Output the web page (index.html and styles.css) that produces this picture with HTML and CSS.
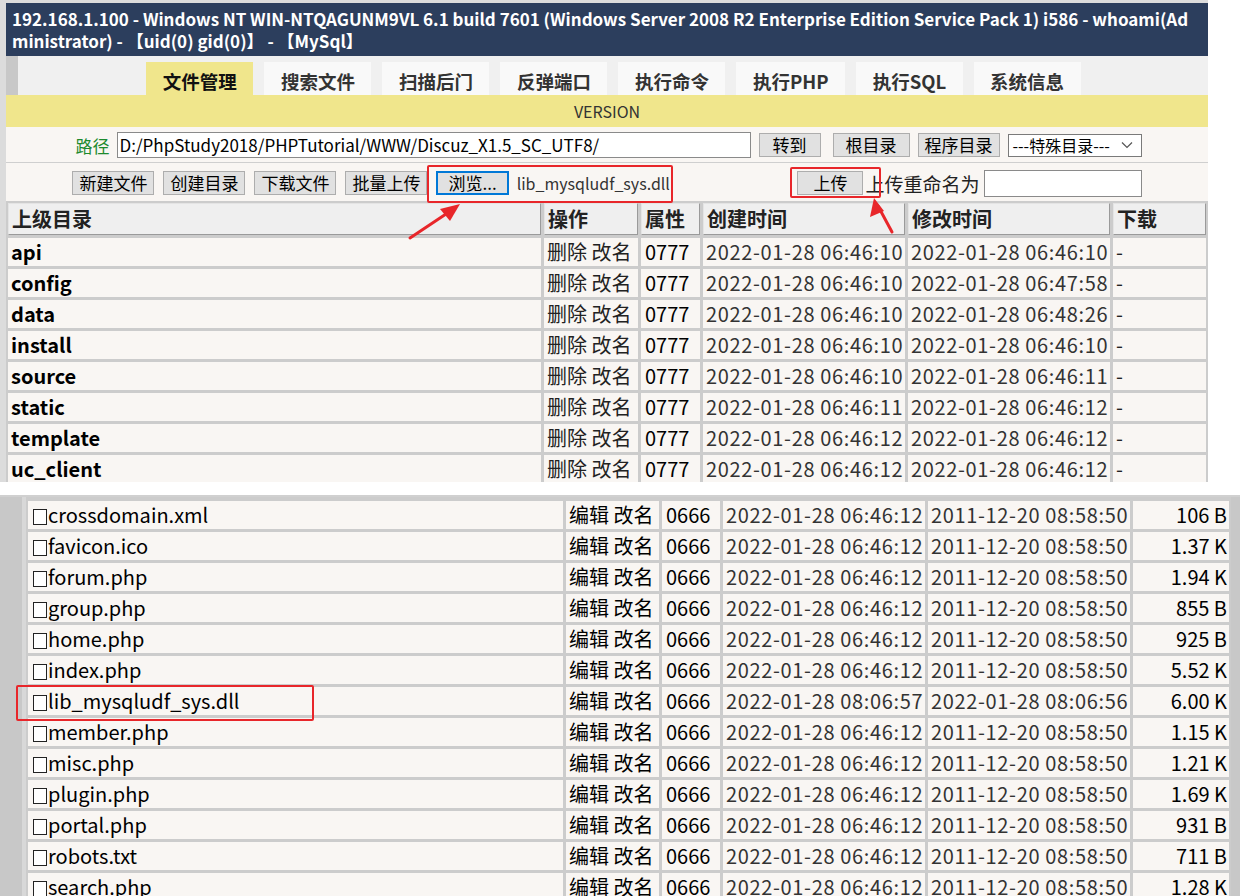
FILE: index.html
```html
<!DOCTYPE html>
<html lang="zh-CN">
<head>
<meta charset="utf-8">
<title>文件管理</title>
<link rel="stylesheet" href="styles.css">
</head>
<body>
<section class="shot shot-top">
  <div class="header">192.168.1.100 - Windows NT WIN-NTQAGUNM9VL 6.1 build 7601 (Windows Server 2008 R2 Enterprise Edition Service Pack 1) i586 - whoami(Administrator) - 【uid(0) gid(0)】 - 【MySql】</div>
  <nav class="tabs">
    <span class="tab active">文件管理</span>
    <span class="tab">搜索文件</span>
    <span class="tab">扫描后门</span>
    <span class="tab">反弹端口</span>
    <span class="tab">执行命令</span>
    <span class="tab">执行PHP</span>
    <span class="tab">执行SQL</span>
    <span class="tab">系统信息</span>
  </nav>
  <div class="version">VERSION</div>
  <div class="pathrow">
    <span class="pathlabel">路径</span>
    <span class="textbox pathbox">D:/PhpStudy2018/PHPTutorial/WWW/Discuz_X1.5_SC_UTF8/</span>
    <span class="btn btn-go">转到</span>
    <span class="btn btn-root">根目录</span>
    <span class="btn">程序目录</span>
    <span class="selectbox">---特殊目录---<svg class="chev" width="12" height="8" viewBox="0 0 12 8"><path d="M1 1.5 L6 6.5 L11 1.5" fill="none" stroke="#555" stroke-width="1.2"/></svg></span>
  </div>
  <div class="toolrow">
    <span class="btn">新建文件</span>
    <span class="btn">创建目录</span>
    <span class="btn">下载文件</span>
    <span class="btn">批量上传</span>
    <span class="fileinput"><span class="btn btn-browse">浏览...</span><span class="filename">lib_mysqludf_sys.dll</span></span>
    <span class="btn btn-upload">上传</span>
    <span class="renamelabel">上传重命名为</span>
    <span class="textbox renamebox"></span>
  </div>
  <div class="ftable ftable-top">
    <div class="th">上级目录</div><div class="th">操作</div><div class="th">属性</div><div class="th">创建时间</div><div class="th">修改时间</div><div class="th">下载</div>

    <div class="td dir">api</div><div class="td">删除 改名</div><div class="td attr">0777</div><div class="td date">2022-01-28 06:46:10</div><div class="td date">2022-01-28 06:46:10</div><div class="td">-</div>
    <div class="td dir">config</div><div class="td">删除 改名</div><div class="td attr">0777</div><div class="td date">2022-01-28 06:46:10</div><div class="td date">2022-01-28 06:47:58</div><div class="td">-</div>
    <div class="td dir">data</div><div class="td">删除 改名</div><div class="td attr">0777</div><div class="td date">2022-01-28 06:46:10</div><div class="td date">2022-01-28 06:48:26</div><div class="td">-</div>
    <div class="td dir">install</div><div class="td">删除 改名</div><div class="td attr">0777</div><div class="td date">2022-01-28 06:46:10</div><div class="td date">2022-01-28 06:46:10</div><div class="td">-</div>
    <div class="td dir">source</div><div class="td">删除 改名</div><div class="td attr">0777</div><div class="td date">2022-01-28 06:46:10</div><div class="td date">2022-01-28 06:46:11</div><div class="td">-</div>
    <div class="td dir">static</div><div class="td">删除 改名</div><div class="td attr">0777</div><div class="td date">2022-01-28 06:46:11</div><div class="td date">2022-01-28 06:46:12</div><div class="td">-</div>
    <div class="td dir">template</div><div class="td">删除 改名</div><div class="td attr">0777</div><div class="td date">2022-01-28 06:46:12</div><div class="td date">2022-01-28 06:46:12</div><div class="td">-</div>
    <div class="td dir">uc_client</div><div class="td">删除 改名</div><div class="td attr">0777</div><div class="td date">2022-01-28 06:46:12</div><div class="td date">2022-01-28 06:46:12</div><div class="td">-</div>
  </div>
  <span class="mark mark-browse"></span>
  <span class="mark mark-upload"></span>
  <svg class="arrows" width="1208" height="482" viewBox="0 0 1208 482">
    <g stroke="#e8262a" stroke-width="3" fill="none" stroke-linecap="round">
      <line x1="410" y1="238" x2="452" y2="210"/>
      <line x1="892" y1="232" x2="878" y2="206"/>
    </g>
    <g fill="#e8262a">
      <polygon points="460,204 440,209 450,221"/>
      <polygon points="874,198 870,217 884,211"/>
    </g>
  </svg>
</section>

<section class="shot shot-bottom">
  <div class="sidebar"></div>
  <div class="ftable ftable-bottom">
    <div class="td"><span class="cb"></span>crossdomain.xml</div><div class="td">编辑 改名</div><div class="td attr">0666</div><div class="td date">2022-01-28 06:46:12</div><div class="td date">2011-12-20 08:58:50</div><div class="td size">106 B</div>
    <div class="td"><span class="cb"></span>favicon.ico</div><div class="td">编辑 改名</div><div class="td attr">0666</div><div class="td date">2022-01-28 06:46:12</div><div class="td date">2011-12-20 08:58:50</div><div class="td size">1.37 K</div>
    <div class="td"><span class="cb"></span>forum.php</div><div class="td">编辑 改名</div><div class="td attr">0666</div><div class="td date">2022-01-28 06:46:12</div><div class="td date">2011-12-20 08:58:50</div><div class="td size">1.94 K</div>
    <div class="td"><span class="cb"></span>group.php</div><div class="td">编辑 改名</div><div class="td attr">0666</div><div class="td date">2022-01-28 06:46:12</div><div class="td date">2011-12-20 08:58:50</div><div class="td size">855 B</div>
    <div class="td"><span class="cb"></span>home.php</div><div class="td">编辑 改名</div><div class="td attr">0666</div><div class="td date">2022-01-28 06:46:12</div><div class="td date">2011-12-20 08:58:50</div><div class="td size">925 B</div>
    <div class="td"><span class="cb"></span>index.php</div><div class="td">编辑 改名</div><div class="td attr">0666</div><div class="td date">2022-01-28 06:46:12</div><div class="td date">2011-12-20 08:58:50</div><div class="td size">5.52 K</div>
    <div class="td"><span class="cb"></span>lib_mysqludf_sys.dll</div><div class="td">编辑 改名</div><div class="td attr">0666</div><div class="td date">2022-01-28 08:06:57</div><div class="td date">2022-01-28 08:06:56</div><div class="td size">6.00 K</div>
    <div class="td"><span class="cb"></span>member.php</div><div class="td">编辑 改名</div><div class="td attr">0666</div><div class="td date">2022-01-28 06:46:12</div><div class="td date">2011-12-20 08:58:50</div><div class="td size">1.15 K</div>
    <div class="td"><span class="cb"></span>misc.php</div><div class="td">编辑 改名</div><div class="td attr">0666</div><div class="td date">2022-01-28 06:46:12</div><div class="td date">2011-12-20 08:58:50</div><div class="td size">1.21 K</div>
    <div class="td"><span class="cb"></span>plugin.php</div><div class="td">编辑 改名</div><div class="td attr">0666</div><div class="td date">2022-01-28 06:46:12</div><div class="td date">2011-12-20 08:58:50</div><div class="td size">1.69 K</div>
    <div class="td"><span class="cb"></span>portal.php</div><div class="td">编辑 改名</div><div class="td attr">0666</div><div class="td date">2022-01-28 06:46:12</div><div class="td date">2011-12-20 08:58:50</div><div class="td size">931 B</div>
    <div class="td"><span class="cb"></span>robots.txt</div><div class="td">编辑 改名</div><div class="td attr">0666</div><div class="td date">2022-01-28 06:46:12</div><div class="td date">2011-12-20 08:58:50</div><div class="td size">711 B</div>
    <div class="td"><span class="cb"></span>search.php</div><div class="td">编辑 改名</div><div class="td attr">0666</div><div class="td date">2022-01-28 06:46:12</div><div class="td date">2011-12-20 08:58:50</div><div class="td size">1.28 K</div>
  </div>
  <div class="rightbar"></div>
  <span class="mark mark-lib"></span>
</section>
</body>
</html>
```
FILE: styles.css
```css
* { box-sizing: border-box; }
html, body { margin: 0; padding: 0; }
body {
  background: #fff;
  font-family: "Noto Sans CJK SC", sans-serif;
  color: #000;
  width: 1240px;
  height: 896px;
  overflow: hidden;
}

.shot { position: relative; overflow: hidden; }

/* ---------- top screenshot ---------- */
.shot-top {
  width: 1208px;
  height: 482px;
  border-top: 3px solid #dcdcdc;
  border-left: 6px solid #dcdcdc;
  background: #f9f6f3;
}
.header {
  background: #2c3e5d;
  color: #fff;
  font-weight: bold;
  font-size: 17px;
  line-height: 22px;
  padding: 5px 6px 9px 6px;
  height: 53px;
  word-break: break-all;
}
.tabs {
  height: 39px;
  background: #f0f0f0;
  border-left: 12px solid #c8c8c8;
  display: flex;
  justify-content: center;
  align-items: flex-end;
  gap: 11px;
  padding-left: 1px;
}
.tab {
  height: 33px;
  padding: 0 16.5px;
  background: #f9f9f9;
  color: #333;
  font-weight: bold;
  font-size: 18.5px;
  line-height: 38px;
}
.tab.active { background: #f0e68c; color: #111; }
.version {
  background: #f0e68c;
  height: 32px;
  line-height: 32px;
  text-align: center;
  font-size: 16px;
  color: #333;
}
.pathrow {
  height: 36px;
  display: flex;
  justify-content: center;
  align-items: center;
  gap: 8px;
  border-bottom: 1px solid #cfcfcf;
  padding-top: 1px;
}
.pathlabel { color: #1d8a2e; font-size: 17px; margin-left: 3px; }
.textbox {
  display: inline-block;
  height: 26px;
  background: #fff;
  border: 1px solid #8a8a8a;
  font-size: 17px;
  line-height: 24px;
  padding: 0 2px;
  color: #000;
}
.pathbox { width: 634px; margin-left: -1px; }
.btn {
  display: inline-block;
  height: 24px;
  padding: 0 6px;
  background: #e1e1e1;
  border: 1px solid #adadad;
  font-size: 17px;
  line-height: 22px;
  color: #000;
  white-space: nowrap;
}
.btn-go { padding: 0 13px; }
.btn-root { padding: 0 12px; margin-left: 4px; }
.selectbox {
  display: inline-flex;
  align-items: center;
  justify-content: space-between;
  width: 134px;
  height: 23px;
  border: 1px solid #7a7a7a;
  background: #fff;
  font-size: 16px;
  padding: 0 8px 0 4px;
  color: #000;
}
.toolrow {
  height: 38px;
  display: flex;
  justify-content: center;
  align-items: center;
  gap: 9px;
  padding-top: 2px;
}
.fileinput {
  display: inline-flex;
  align-items: center;
  gap: 8px;
  width: 352px;
}
.btn-browse {
  border: 2px solid #0078d7;
  padding: 0 10px;
  line-height: 20px;
}
.filename { font-size: 16px; color: #333; }
.btn-upload { padding: 0 15px; }
.renamelabel { font-size: 19px; color: #222; margin-left: -7px; }
.renamebox { width: 158px; height: 27px; margin-left: -5px; }

.ftable {
  display: grid;
  gap: 3px;
  background: #cccccc;
}
.ftable-top {
  grid-template-columns: 533px 94px 59px 202px 202px 93px;
  grid-template-rows: 32px;
  grid-auto-rows: 28px;
  padding: 2px;
  width: 1202px;
}
.th {
  background: #efefef;
  border: 1px solid;
  border-color: #e4e4e4 #9a9a9a #9a9a9a #e4e4e4;
  font-weight: bold;
  font-size: 20px;
  line-height: 30px;
  padding: 0 3px;
  color: #222;
}
.td {
  background: #f9f6f3;
  font-size: 20px;
  line-height: 28px;
  padding: 0 3px;
  color: #222;
  white-space: nowrap;
  overflow: hidden;
}
.td.dir { font-weight: bold; color: #000; }
.td.attr { color: #000; padding-left: 4px; }
.td.date { color: #333; letter-spacing: 0.65px; }
.td.size { text-align: right; padding-right: 2px; color: #000; }

.mark {
  position: absolute;
  border: 2px solid #e8262a;
  border-radius: 2px;
}
.mark-browse { left: 421px; top: 162px; width: 246px; height: 38px; }
.mark-upload { left: 784px; top: 164px; width: 91px; height: 31px; }
.arrows { position: absolute; left: -6px; top: -3px; }

/* ---------- bottom screenshot ---------- */
.shot-bottom {
  margin-top: 13px;
  height: 401px;
  border-top: 2px solid #d0d0d0;
  background: #d8d8d8;
  display: flex;
}
.sidebar {
  width: 22px;
  flex: none;
  background: #c8c8c8;
}
.ftable-bottom {
  grid-template-columns: 535px 93px 58px 202px 202px 96px;
  grid-auto-rows: 28px;
  padding: 4px 2px 0 2px;
  margin-left: 4px;
  width: 1205px;
  flex: none;
  align-content: start;
}
.ftable-bottom .td { color: #000; }
.ftable-bottom .td.date { color: #333; letter-spacing: 0.65px; }
.ftable-bottom .td:nth-child(6n+1) { padding-left: 5px; }
.cb {
  display: inline-block;
  width: 14px;
  height: 16px;
  border: 1px solid #222;
  vertical-align: -2px;
  margin-right: 1px;
  background: #fff;
}
.rightbar { flex: 1; background: #c8c8c8; }
.mark-lib { left: 16px; top: 188px; width: 298px; height: 36px; }
```
